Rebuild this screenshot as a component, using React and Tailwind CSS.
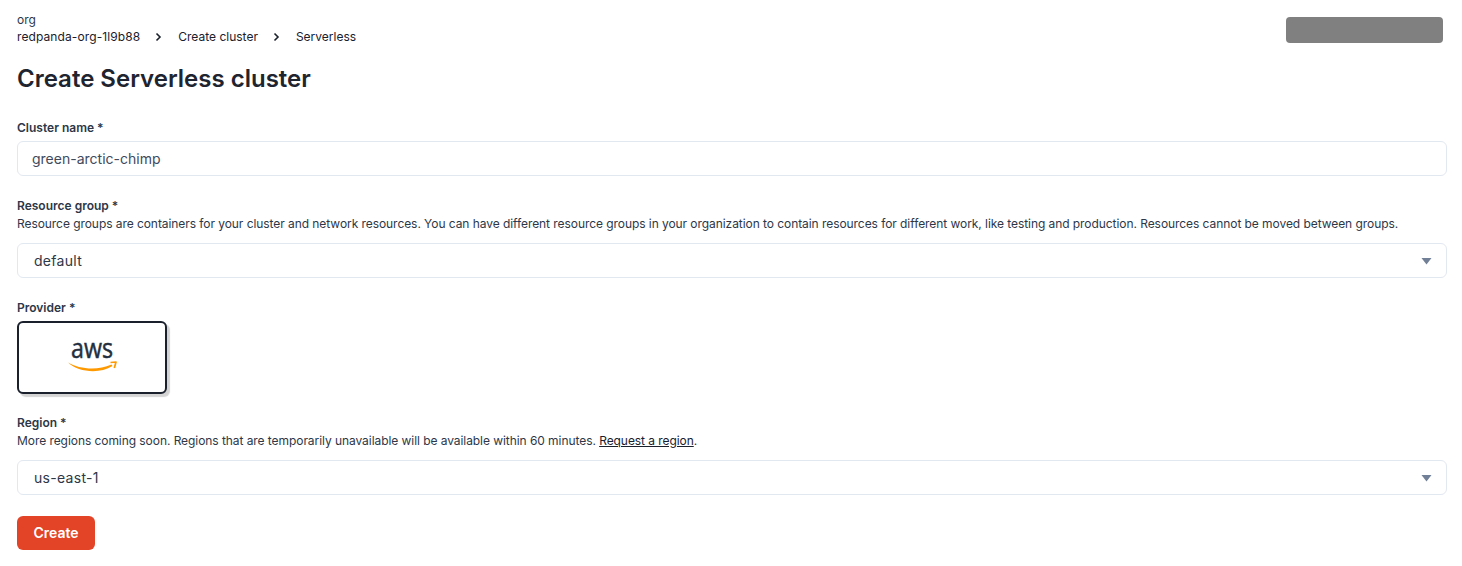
import React from "react";

const font = { fontFamily: "Inter, 'Liberation Sans', sans-serif" };

function Chevron() {
  return (
    <svg width="16" height="16" viewBox="0 0 16 16" fill="none" stroke="#1a202c" strokeWidth="1.6" className="mx-[11px]">
      <path d="M5.5 4.5 9 8 5.5 11.5" />
    </svg>
  );
}

function Field({ label, help, children, className }) {
  return (
    <div className={className}>
      <div className="text-[12px] leading-[18px] font-semibold text-[#2d3748]">{label}</div>
      {help && <div className="text-[12px] leading-[18px] text-[#2d3748] tracking-[-0.062px]">{help}</div>}
      {children}
    </div>
  );
}

function Select({ value }) {
  return (
    <div className="mt-[10px] h-[35px] border border-[#e2e8f0] rounded-md flex items-center justify-between pl-4 pr-[14px] text-[14px] text-[#2d3748] tracking-[0.3px]">
      <span>{value}</span>
      <svg width="11" height="8" viewBox="0 0 11 8"><path d="M0.5 1h10L5.5 7.5z" fill="#718096" /></svg>
    </div>
  );
}

function AwsLogo() {
  return (
    <svg width="56" height="60" viewBox="0 -10 56 60">
      <text
        x="7"
        y="19.5"
        textLength="42"
        lengthAdjust="spacingAndGlyphs"
        fontFamily="'Open Sans', sans-serif"
        fontSize="27"
        fill="#232f3e"
        stroke="#232f3e"
        strokeWidth="0.5"
      >
        aws
      </text>
      <path d="M4 24.5C15 31 33 33 47.5 26.5L48.5 28C35 36.5 14 34 4 24.5z" fill="#ff9900" />
      <path d="M46.5 24.5 52 24 50.3 30" fill="none" stroke="#ff9900" strokeWidth="1.7" strokeLinejoin="round" />
    </svg>
  );
}

export default function App() {
  return (
    <div style={font} className="w-[1462px] h-[566px] bg-white pl-[17px] pr-[15px] pt-[12px] text-[#1a202c] overflow-hidden">
      <div className="flex justify-between pr-[4px]">
        <div>
          <div className="text-[12px] leading-[16px] text-[#2d3748]">org</div>
          <div className="flex items-center h-[17px] text-[12px] text-[#1a202c]">
            <span className="tracking-[0.1px]">redpanda-org-1l9b88</span>
            <Chevron />
            <span>Create cluster</span>
            <Chevron />
            <span>Serverless</span>
          </div>
        </div>
        <div className="w-[157px] h-[26px] mt-[5px] rounded-[4px] bg-[#808080]" />
      </div>

      <h1 className="mt-[18px] text-[24px] leading-[32px] font-semibold text-[#1f2530]">Create Serverless cluster</h1>

      <Field label="Cluster name *" className="mt-[24px]">
        <div className="mt-[4px] h-[35px] border border-[#e2e8f0] rounded-md flex items-center pl-[14px] text-[14px] text-[#3f4a5c]">
          green-arctic-chimp
        </div>
      </Field>

      <Field
        label="Resource group *"
        help="Resource groups are containers for your cluster and network resources. You can have different resource groups in your organization to contain resources for different work, like testing and production. Resources cannot be moved between groups."
        className="mt-[21px]"
      >
        <Select value="default" />
      </Field>

      <Field label="Provider *" className="mt-[21px]">
        <div className="mt-[4px] w-[150px] h-[73px] border-2 border-[#1a202c] rounded-md bg-white shadow-[3px_3px_1px_#d4d4d4] flex items-center justify-center">
          <AwsLogo />
        </div>
      </Field>

      <Field
        label={"Region *"}
        help={
          <>
            More regions coming soon. Regions that are temporarily unavailable will be available within 60 minutes.{" "}
            <a className="text-[#1a202c] underline">Request a region</a>.
          </>
        }
        className="mt-[20px]"
      >
        <Select value="us-east-1" />
      </Field>

      <button className="mt-[21px] w-[78px] h-[34px] pb-[2px] rounded-md bg-[#e34326] text-white text-[14px] font-semibold">Create</button>
    </div>
  );
}
